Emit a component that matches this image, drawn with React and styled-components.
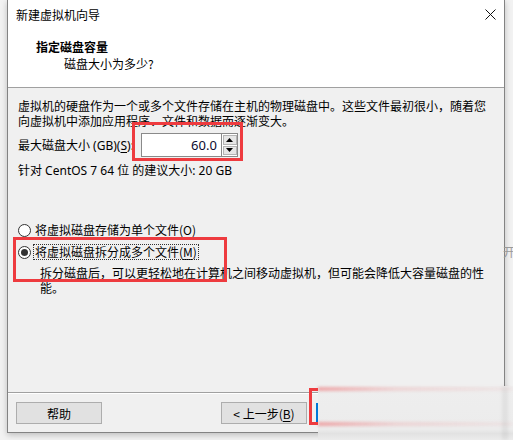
import React from 'react'
import styled, { createGlobalStyle } from 'styled-components'

const GlobalStyle = createGlobalStyle`
	html, body {
		margin: 0;
		padding: 0;
		background: #f2f2f2;
		overflow: hidden;
	}
	body {
		font-family: "Noto Sans", "Noto Sans CJK SC", sans-serif;
		font-size: 12px;
		color: #000;
	}
`

const App = () => {
	return (
		<Page>
			<GlobalStyle />
			<Window>
				<Header>
					<TitleBar>
						<span>新建虚拟机向导</span>
						<CloseButton>
							<svg width="11" height="11" viewBox="0 0 11 11">
								<path d="M0.5 0.5 L10.5 10.5 M10.5 0.5 L0.5 10.5" stroke="#111" strokeWidth="1" />
							</svg>
						</CloseButton>
					</TitleBar>
					<Heading>指定磁盘容量</Heading>
					<SubHeading>磁盘大小为多少?</SubHeading>
				</Header>

				<Body>
					<Paragraph>
						虚拟机的硬盘作为一个或多个文件存储在主机的物理磁盘中。这些文件最初很小，随着您向虚拟机中添加应用程序、文件和数据而逐渐变大。
					</Paragraph>
					<SizeRow>
						<span>最大磁盘大小 (GB)(<u>S</u>):</span>
						<SpinBox>
							<SpinInput>60.0</SpinInput>
							<SpinButtons>
								<SpinButton>
									<svg width="7" height="4" viewBox="0 0 7 4"><path d="M0 4 L3.5 0 L7 4 Z" fill="#000" /></svg>
								</SpinButton>
								<SpinButton>
									<svg width="7" height="4" viewBox="0 0 7 4"><path d="M0 0 L3.5 4 L7 0 Z" fill="#000" /></svg>
								</SpinButton>
							</SpinButtons>
							<Marker $top={-11} $left={-9} $width={111} $height={39} />
						</SpinBox>
					</SizeRow>
					<Hint>针对 CentOS 7 64 位 的建议大小: 20 GB</Hint>

					<Options>
						<Option>
							<Radio />
							<OptionLabel>将虚拟磁盘存储为单个文件(<u>O</u>)</OptionLabel>
						</Option>
						<Option>
							<Radio $checked />
							<OptionLabel $focused>将虚拟磁盘拆分成多个文件(<u>M</u>)</OptionLabel>
							<Marker $top={-7} $left={-5} $width={214} $height={45} />
						</Option>
						<Description>
							拆分磁盘后，可以更轻松地在计算机之间移动虚拟机，但可能会降低大容量磁盘的性能。
						</Description>
					</Options>
				</Body>

				<Footer>
					<Button>帮助</Button>
					<Button $push>&lt; 上一步(<u>B</u>)</Button>
					<NextSlot>
						<Marker $top={-14} $left={-7} $width={220} $height={37} />
						<FocusEdge />
					</NextSlot>
				</Footer>
			</Window>

			{/* smudged area covering the remaining buttons */}
			<Smear>
				<SmearLine $top={1} />
				<SmearLine $top={36} />
				<SmearEdge />
			</Smear>
			<BehindText>开</BehindText>
		</Page>
	)
}

export default App


const Page = styled.div`
	position: relative;
	width: 513px;
	height: 440px;
	overflow: hidden;
`

const Window = styled.div`
	margin-left: 7px;
	width: 496px;
	height: 432px;
	display: flex;
	flex-direction: column;
	background: #f0f0f0;
	border: 1px solid #838383;
	border-top: none;
	box-shadow: 0 2px 6px rgba(0, 0, 0, 0.22);
`

const Header = styled.div`
	height: 87px;
	flex-shrink: 0;
	background: #fff;
	border-bottom: 1px solid #a0a0a0;
	box-sizing: content-box;
`

const TitleBar = styled.div`
	height: 29px;
	display: flex;
	align-items: center;
	justify-content: space-between;
	padding: 0 8px 0 8px;
	font-family: "Noto Sans CJK SC", sans-serif;
	font-size: 12px;
`

const CloseButton = styled.div`
	width: 11px;
	height: 11px;
	display: flex;

	svg {
		display: block;
	}
`

const Heading = styled.div`
	margin-top: 10px;
	padding-left: 28px;
	font-family: "Noto Sans CJK SC", sans-serif;
	font-weight: 700;
	line-height: 16px;
`

const SubHeading = styled.div`
	margin-top: 1px;
	padding-left: 56px;
	font-family: "Noto Sans CJK SC", sans-serif;
	line-height: 16px;
`

const Body = styled.div`
	flex: 1;
	padding: 11px 14px 0 10px;
`

const Paragraph = styled.p`
	margin: 0;
	line-height: 15px;
`

const SizeRow = styled.div`
	margin-top: 4px;
	height: 24px;
	display: flex;
	align-items: center;
	gap: 7px;

	u {
		text-underline-offset: 2px;
	}
`

const SpinBox = styled.div`
	position: relative;
	display: flex;
	height: 24px;
`

const SpinInput = styled.div`
	width: 81px;
	height: 24px;
	border: 1px solid #8a8a8a;
	background: #fff;
	display: flex;
	align-items: center;
	justify-content: flex-end;
	padding-right: 4px;
	box-sizing: border-box;
	font-size: 13px;
	color: #0c0c30;
`

const SpinButtons = styled.div`
	width: 16px;
	display: flex;
	flex-direction: column;
	gap: 1px;
	padding: 1px 0 1px 1px;
	box-sizing: border-box;
	border: 1px solid #8a8a8a;
	border-left: none;
	background: #fff;
`

const SpinButton = styled.div`
	flex: 1;
	display: flex;
	align-items: center;
	justify-content: center;
	background: #e6e6e6;
	border: 1px solid #b4b4b4;
`

const Marker = styled.div`
	position: absolute;
	top: ${p => p.$top}px;
	left: ${p => p.$left}px;
	width: ${p => p.$width}px;
	height: ${p => p.$height}px;
	border: 3px solid #ee3b3f;
	box-sizing: border-box;
	pointer-events: none;
`

const Hint = styled.div`
	margin-top: 6px;
	line-height: 15px;
`

const Options = styled.div`
	margin-top: 44px;
	display: flex;
	flex-direction: column;
`

const Option = styled.div`
	position: relative;
	height: 16px;
	display: flex;
	align-items: center;
	gap: 3px;
	font-family: "Noto Sans CJK SC", sans-serif;
	margin-bottom: 6px;

	u {
		text-underline-offset: 2px;
	}
`

const Radio = styled.span`
	width: 13px;
	height: 13px;
	border: 1px solid #333;
	border-radius: 50%;
	box-sizing: border-box;
	background: #fff;
	display: flex;
	align-items: center;
	justify-content: center;

	&::after {
		content: '';
		display: ${p => (p.$checked ? 'block' : 'none')};
		width: 7px;
		height: 7px;
		border-radius: 50%;
		background: #333;
	}
`

const OptionLabel = styled.span`
	line-height: 14px;
	padding: 0 1px;
	outline: ${p => (p.$focused ? '1px dotted #333' : 'none')};
`

const Description = styled.p`
	margin: -1px 0 0;
	padding-left: 22px;
	line-height: 15px;
	font-family: "Noto Sans CJK SC", sans-serif;
`

const Footer = styled.div`
	height: 30px;
	flex-shrink: 0;
	border-top: 1px solid #a0a0a0;
	box-shadow: inset 0 1px 0 #fff;
	display: flex;
	align-items: flex-start;
	padding: 9px 0 0 8px;
	box-sizing: content-box;
`

const Button = styled.button`
	width: 86px;
	height: 22px;
	margin-left: ${p => (p.$push ? '119px' : '0')};
	background: #e1e1e1;
	border: 1px solid #adadad;
	font-family: "Noto Sans CJK SC", sans-serif;
	font-size: 12px;
	color: #000;
	padding: 0;
	display: flex;
	align-items: center;
	justify-content: center;

	u {
		text-underline-offset: 2px;
	}
`

const NextSlot = styled.div`
	position: relative;
	margin-left: 9px;
	width: 86px;
	height: 22px;
`

const FocusEdge = styled.div`
	width: 2px;
	height: 20px;
	margin-top: 1px;
	background: #0078d7;
`

const Smear = styled.div`
	position: absolute;
	left: 318px;
	top: 386px;
	width: 195px;
	height: 54px;
	background: linear-gradient(180deg, #eeeeee 0%, #ececec 80%, #e2e2e2 88%, #ececec 100%);
`

const SmearLine = styled.div`
	position: absolute;
	left: 0;
	top: ${p => p.$top}px;
	width: 100%;
	height: 4px;
	background: linear-gradient(90deg, rgba(238, 59, 63, 0.4) 0%, rgba(238, 59, 63, 0.14) 40%, rgba(238, 59, 63, 0.04) 100%);
	filter: blur(1.5px);
`

const SmearEdge = styled.div`
	position: absolute;
	right: 6px;
	top: 0;
	width: 4px;
	height: 100%;
	background: rgba(0, 0, 0, 0.08);
	filter: blur(2px);
`

const BehindText = styled.span`
	position: absolute;
	left: 503px;
	top: 243px;
	font-family: "Noto Sans CJK SC", sans-serif;
	font-size: 12px;
	color: #9a9a9a;
`
